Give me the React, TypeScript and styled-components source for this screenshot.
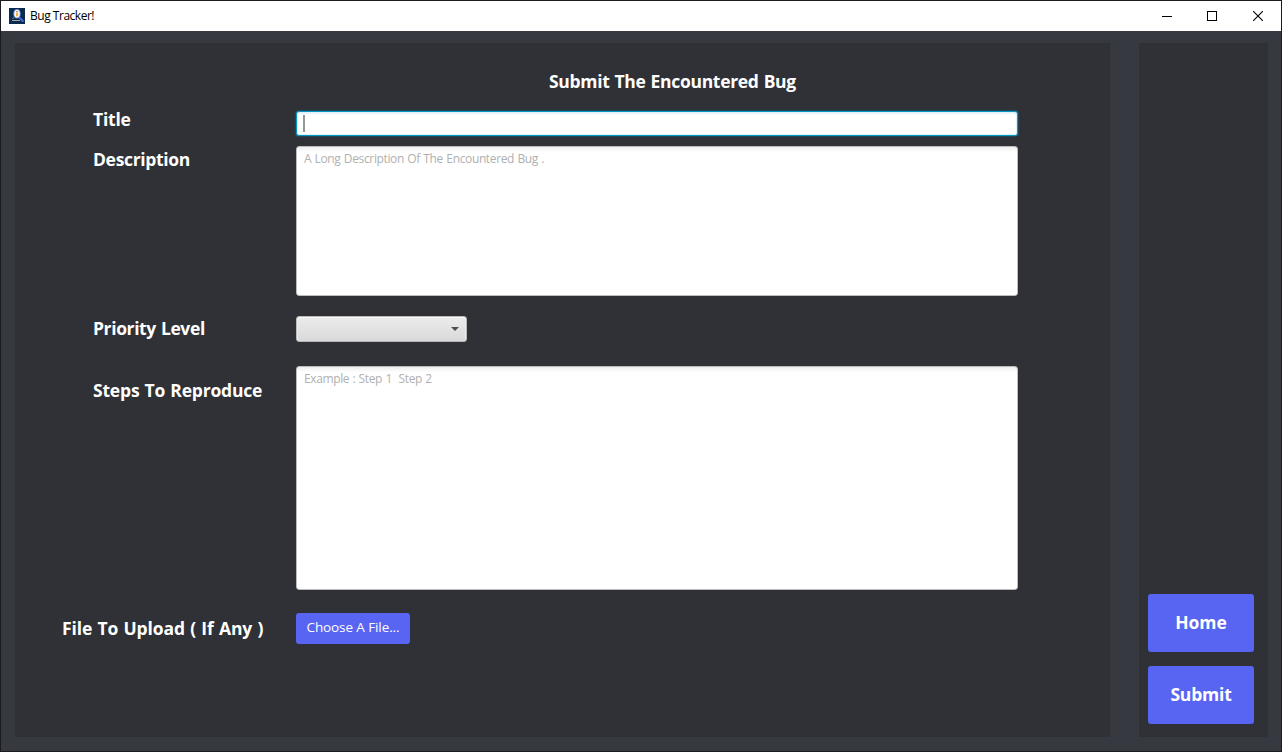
import React from 'react';
import styled, { createGlobalStyle, css } from 'styled-components';

const GlobalStyle = createGlobalStyle`
  * { box-sizing: border-box; }
  body { margin: 0; overflow: hidden; font-family: "Open Sans", "Noto Sans", sans-serif; }
`;

const Window = styled.div`
  display: flex;
  flex-direction: column;
  width: 1282px;
  height: 752px;
  border: 1px solid #1c1b22;
  background: #363940;
`;

const TitleBar = styled.header`
  display: flex;
  align-items: center;
  height: 30px;
  padding-left: 8px;
  background: #fff;
`;

const WindowTitle = styled.span<{ $tracking: number }>`
  flex: 1;
  margin-left: 5px;
  color: #000;
  font-size: 12px;
  line-height: 16px;
  letter-spacing: ${(p) => p.$tracking}px;
`;

const Controls = styled.div`
  display: grid;
  grid-template-columns: 45px 46px 10px;
  padding-right: 18px;
  margin-top: -1px;
`;

const Content = styled.main`
  flex: 1;
  display: flex;
  gap: 29px;
  padding: 12px 13px 14px 14px;
`;

const FormPanel = styled.form`
  width: 1095px;
  padding-top: 25px;
  background: #2f3136;
`;

const Heading = styled.h1<{ $tracking: number }>`
  width: 250px;
  margin: 0 0 17px 534px;
  color: #fff;
  font-size: 17.5px;
  font-weight: 700;
  line-height: 26px;
  white-space: nowrap;
  word-spacing: 0.8px;
  letter-spacing: ${(p) => p.$tracking}px;
`;

const Row = styled.div<{ $gap: number; $indent?: number }>`
  display: flex;
  align-items: flex-start;
  margin-bottom: ${(p) => p.$gap}px;
  padding-left: ${(p) => p.$indent ?? 78}px;
`;

const Label = styled.label<{ $width?: number; $shift: number; $tracking: number }>`
  flex: none;
  width: ${(p) => p.$width ?? 203}px;
  height: 24px;
  margin-top: ${(p) => p.$shift}px;
  margin-bottom: -4px;
  color: #fff;
  font-size: 17.5px;
  font-weight: 700;
  line-height: 24px;
  white-space: nowrap;
  word-spacing: 0.8px;
  letter-spacing: ${(p) => p.$tracking}px;
`;

const fieldFrame = css`
  width: 722px;
  border-radius: 3px;
  background: #fff;
`;

const TextField = styled.div`
  ${fieldFrame}
  height: 25px;
  padding: 3px 7px;
  border: 1px solid #0396c3;
  box-shadow: 0 0 2px rgba(3, 158, 211, 0.7), inset 0 0 0 1px #e1f1f8, inset 0 1px 1px 1px #e8f3f8;
`;

const Caret = styled.div`
  width: 2px;
  height: 17px;
  margin-left: -1px;
  background: #969696;
`;

const TextArea = styled.div<{ $height: number; $tracking: number }>`
  ${fieldFrame}
  height: ${(p) => p.$height}px;
  padding: 4px 7px;
  border: 1px solid #bcbcbc;
  background: linear-gradient(#ededed, #fff 5px);
  color: #b0b0b0;
  font-size: 12px;
  line-height: 16px;
  word-spacing: 0.6px;
  letter-spacing: ${(p) => p.$tracking}px;
  white-space: pre;
`;

const Combo = styled.div`
  display: flex;
  align-items: center;
  justify-content: flex-end;
  width: 171px;
  height: 26px;
  padding-right: 7px;
  border: 1px solid #b9b9b9;
  border-radius: 3px;
  background: linear-gradient(#ececec, #d9d9d9);
  box-shadow: inset 0 1px 0 #f8f8f8, inset 1px 0 0 #ececec, inset -1px 0 0 #ececec;
`;

const FileButton = styled.button<{ $tracking: number }>`
  width: 114px;
  height: 31px;
  padding: 0 0 2px;
  border: 0;
  border-radius: 3px;
  background: #5865f2;
  color: #fff;
  font: 400 13.5px/29px "Open Sans", "Noto Sans", sans-serif;
  letter-spacing: ${(p) => p.$tracking}px;
`;

const SidePanel = styled.aside`
  display: flex;
  flex-direction: column;
  justify-content: flex-end;
  gap: 14px;
  width: 129px;
  padding: 0 14px 13px 9px;
  background: #2f3136;
`;

const ActionButton = styled.button<{ $tracking: number }>`
  height: 58px;
  padding: 0 0 2px;
  border: 0;
  border-radius: 3px;
  background: #5865f2;
  color: #fff;
  font: 700 17.5px/56px "Open Sans", "Noto Sans", sans-serif;
  letter-spacing: ${(p) => p.$tracking}px;
`;

const AppIcon = () => (
  <svg width="16" height="16" viewBox="0 0 16 16">
    <rect width="16" height="16" fill="#0b2a50" />
    <path d="M3 12.5h8" stroke="#a3a695" />
    <path d="M3.5 11L5.5 8.5" stroke="#7b8794" />
    <path d="M10.3 9.3l4 4.4" stroke="#4a6be0" strokeWidth="2" />
    <ellipse cx="8" cy="5.8" rx="3.2" ry="4.3" fill="#fbf9f6" stroke="#6c8ae0" strokeWidth=".8" />
    <path d="M8 4.5v3.8" stroke="#f5a52a" strokeWidth="1.8" />
    <path d="M7.2 3.5h1.6" stroke="#8d8078" />
  </svg>
);

export default function App() {
  return (
    <>
      <GlobalStyle />
      <Window>
        <TitleBar>
          <AppIcon />
          <WindowTitle $tracking={-0.48}>Bug Tracker!</WindowTitle>
          <Controls>
            <svg width="10" height="10" viewBox="0 0 10 10"><path d="M0 5.5h10" stroke="#000" /></svg>
            <svg width="10" height="10" viewBox="0 0 10 10"><rect x=".5" y=".5" width="9" height="9" fill="none" stroke="#000" /></svg>
            <svg width="10" height="10" viewBox="0 0 10 10"><path d="M0 0L10 10M10 0L0 10" stroke="#000" strokeWidth="1.1" /></svg>
          </Controls>
        </TitleBar>
        <Content>
          <FormPanel>
            <Heading $tracking={-0.31}>Submit The Encountered Bug</Heading>
            <Row $gap={10}>
              <Label $shift={-4} $tracking={-0.22}>Title</Label>
              <TextField><Caret /></TextField>
            </Row>
            <Row $gap={20}>
              <Label $shift={1} $tracking={-0.33}>Description</Label>
              <TextArea $height={150} $tracking={-0.36}>A Long Description Of The Encountered Bug .</TextArea>
            </Row>
            <Row $gap={24}>
              <Label $shift={0} $tracking={-0.38}>Priority Level</Label>
              <Combo>
                <svg width="8" height="4" viewBox="0 0 8 4"><path d="M0 0h8L4 4z" fill="#4d4d4d" /></svg>
              </Combo>
            </Row>
            <Row $gap={23}>
              <Label $shift={12} $tracking={-0.19}>Steps To Reproduce</Label>
              <TextArea $height={224} $tracking={-0.38}>{'Example : Step 1  Step 2'}</TextArea>
            </Row>
            <Row $gap={0} $indent={47}>
              <Label $shift={3} $width={234} $tracking={-0.1}>File To Upload ( If Any )</Label>
              <FileButton type="button" $tracking={-0.1}>Choose A File...</FileButton>
            </Row>
          </FormPanel>
          <SidePanel>
            <ActionButton $tracking={-0.1}>Home</ActionButton>
            <ActionButton $tracking={-0.2}>Submit</ActionButton>
          </SidePanel>
        </Content>
      </Window>
    </>
  );
}
